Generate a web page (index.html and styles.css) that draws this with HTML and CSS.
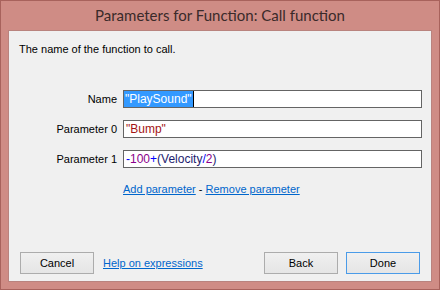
FILE: index.html
```html
<!DOCTYPE html>
<html>
<head>
<meta charset="utf-8">
<link rel="stylesheet" href="styles.css">
</head>
<body>
<div class="window">
  <div class="titlebar">Parameters for Function: Call function</div>
  <div class="content">
    <p class="desc">The name of the function to call.</p>
    <div class="form">
      <label class="lbl">Name</label>
      <div class="field"><span class="sel">"PlaySound"</span><span class="caret"></span></div>
      <label class="lbl">Parameter 0</label>
      <div class="field"><span class="str">"Bump"</span></div>
      <label class="lbl">Parameter 1</label>
      <div class="field"><span class="op">-</span><span class="num">100</span><span class="op">+</span><span class="id">(Velocity</span><span class="op">/</span><span class="num">2</span><span class="id">)</span></div>
      <span></span>
      <div class="links"><a href="#">Add parameter</a> - <a href="#">Remove parameter</a></div>
    </div>
    <div class="spacer"></div>
    <div class="buttons">
      <button class="btn">Cancel</button>
      <a href="#" class="help">Help on expressions</a>
      <span class="grow"></span>
      <button class="btn">Back</button>
      <button class="btn default">Done</button>
    </div>
  </div>
</div>
</body>
</html>
```
FILE: styles.css
```css
html, body {
  margin: 0;
  padding: 0;
}
body {
  font-family: "Liberation Sans", Arial, sans-serif;
  font-size: 11px;
  color: #000;
}
.window {
  width: 440px;
  height: 290px;
  box-sizing: border-box;
  background: #cf8c85;
  border: 1px solid #a8625c;
  display: flex;
  flex-direction: column;
}
.titlebar {
  height: 29px;
  line-height: 28px;
  text-align: center;
  font-family: Lato, "Liberation Sans", sans-serif;
  font-size: 15px;
  color: #3a2a2a;
  flex: none;
}
.content {
  flex: 1;
  margin: 0 7px 7px 7px;
  background: #f0f0f0;
  border: 1px solid #b9837e;
  display: flex;
  flex-direction: column;
}
.desc {
  margin: 10px 0 0 10px;
  line-height: 16px;
}
.form {
  display: grid;
  grid-template-columns: 108px 299px;
  column-gap: 6px;
  row-gap: 12px;
  margin-top: 33px;
  align-items: center;
}
.lbl {
  text-align: right;
  line-height: 18px;
}
.field {
  height: 18px;
  box-sizing: border-box;
  border: 1px solid #646464;
  background: #fff;
  font-size: 12px;
  line-height: 16px;
  white-space: nowrap;
  display: flex;
  align-items: stretch;
}
.sel {
  background: #3399ff;
  color: #fff;
  padding: 0 1px 0 1px;
}
.caret {
  width: 1px;
  background: #000;
}
.str { color: #a31515; padding-left: 2px; }
.field .op:first-child { padding-left: 2px; }
.op { color: #0000ff; }
.num { color: #8b008b; }
.id { color: #1c1c6e; }
.links {
  margin-top: 1px;
  line-height: 16px;
}
a {
  color: #0066cc;
  text-decoration: underline;
}
.spacer { flex: 1; }
.buttons {
  display: flex;
  align-items: center;
  padding: 0 11px 7px 11px;
}
.btn {
  width: 74px;
  height: 22px;
  box-sizing: border-box;
  border: 1px solid #acacac;
  background: linear-gradient(#f0f0f0, #e5e5e5);
  font-family: inherit;
  font-size: 11px;
  color: #000;
  padding: 0;
  margin: 0;
}
.btn + .btn { margin-left: 8px; }
.btn.default { border-color: #4a9be8; }
.help { margin-left: 9px; }
.grow { flex: 1; }
```
